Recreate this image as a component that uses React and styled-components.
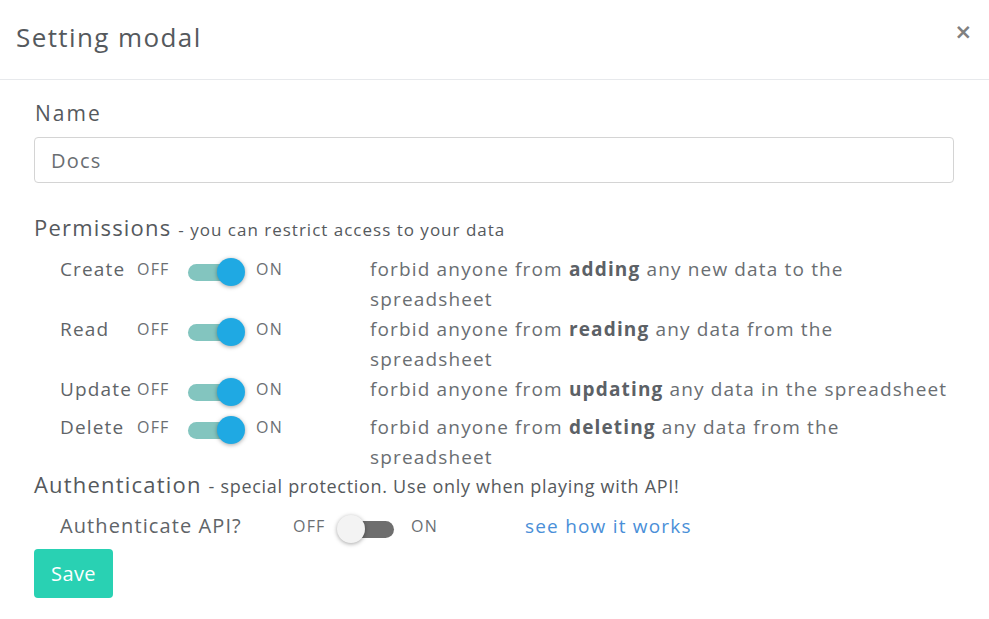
import React from "react";
import styled, { createGlobalStyle } from "styled-components";

const Global = createGlobalStyle`
  html, body { margin: 0; padding: 0; background: #fff; }
  body { font-family: "Open Sans", "Liberation Sans", sans-serif; color: #5b5f63; }
  * { box-sizing: border-box; }
`;

const Modal = styled.div`
  width: 989px;
  background: #fff;
`;

const Header = styled.div`
  height: 80px;
  padding: 0 16px 0 16px;
  display: flex;
  align-items: center;
  justify-content: space-between;
  border-bottom: 1px solid #e7e9ec;
`;

const Title = styled.h4`
  margin: 0 0 5px 0;
  font-size: 26px;
  font-weight: 400;
  color: #55595d;
  letter-spacing: 1.4px;
`;

const Close = styled.button`
  border: 0;
  background: none;
  padding: 0;
  margin: 0 1px 14px 0;
  font-family: "DejaVu Sans", sans-serif;
  font-size: 21px;
  font-weight: 700;
  color: #808080;
  line-height: 1;
  cursor: pointer;
`;

const Body = styled.div`
  padding: 20px 35px 20px 34px;
`;

const Label = styled.div`
  font-size: 21px;
  line-height: 26px;
  color: #55595d;
  letter-spacing: 2px;
  padding-left: 1px;
`;

const Input = styled.input`
  display: block;
  width: 100%;
  height: 46px;
  margin-top: 11px;
  padding: 0 16px;
  border: 1px solid #d4d4d4;
  border-radius: 4px;
  font-family: inherit;
  font-size: 20px;
  color: #6a6e72;
  letter-spacing: 1.2px;
  outline: none;
`;

const Section = styled.div`
  margin-top: ${(p) => p.$top}px;
  font-size: 22px;
  line-height: 30px;
  color: #55595d;
  letter-spacing: 1.2px;
`;

const SectionNote = styled.span`
  font-size: ${(p) => (p.$narrow ? "18px" : "17px")};
  letter-spacing: ${(p) => (p.$narrow ? "0.7px" : "1px")};
`;

const Rows = styled.div`
  margin-top: ${(p) => p.$top}px;
  display: flex;
  flex-direction: column;
`;

const Row = styled.div`
  display: grid;
  grid-template-columns: ${(p) => p.$cols};
  align-items: start;
  min-height: 38px;
  padding-left: 26px;
`;

const RowLabel = styled.div`
  font-size: ${(p) => (p.$wide ? "20px" : "19px")};
  line-height: 30px;
  color: #606468;
  letter-spacing: ${(p) => (p.$wide ? "1.1px" : "1.15px")};
  white-space: nowrap;
`;

const State = styled.div`
  font-size: 16px;
  line-height: 30px;
  color: #6b6f73;
  letter-spacing: 1.2px;
`;

const SwitchBox = styled.div`
  position: relative;
  width: 58px;
  height: 32px;
`;

const Track = styled.div`
  position: absolute;
  left: 0;
  top: 10px;
  width: ${(p) => (p.$on ? "52px" : "54px")};
  height: 17px;
  border-radius: 9px;
  background: ${(p) => (p.$on ? "#83c5bf" : "#6e6e6e")};
`;

const Thumb = styled.div`
  position: absolute;
  top: 4px;
  left: ${(p) => (p.$on ? "29px" : "-3px")};
  width: 28px;
  height: 28px;
  border-radius: 50%;
  background: ${(p) => (p.$on ? "#1fa9e3" : "#f3f3f3")};
  box-shadow: 0 1px 4px rgba(0, 0, 0, 0.35);
`;

const Desc = styled.div`
  font-size: 19px;
  line-height: 30px;
  color: #6a6e72;
  letter-spacing: 1.15px;
  b {
    font-weight: 700;
    color: #5c6166;
  }
`;

const Link = styled.a`
  font-size: 19px;
  line-height: 30px;
  color: #4a8fd8;
  text-decoration: none;
  letter-spacing: 1.2px;
`;

const SaveButton = styled.button`
  margin-top: 0;
  width: 79px;
  height: 49px;
  border: 0;
  border-radius: 4px;
  background: #29d1b3;
  color: #fff;
  font-family: inherit;
  font-size: 20px;
  letter-spacing: 0.4px;
  cursor: pointer;
`;

function Switch({ on }) {
  return (
    <SwitchBox>
      <Track $on={on} />
      <Thumb $on={on} />
    </SwitchBox>
  );
}

const permissions = [
  { label: "Create", verb: "adding", rest: "any new data to the", tail: "spreadsheet" },
  { label: "Read", verb: "reading", rest: "any data from the", tail: "spreadsheet" },
  { label: "Update", verb: "updating", rest: "any data in the spreadsheet" },
  { label: "Delete", verb: "deleting", rest: "any data from the", tail: "spreadsheet" },
];

const permCols = "77px 51px 68px 114px 1fr";
const authCols = "233px 47px 71px 114px 1fr";

export default function App() {
  return (
    <>
      <Global />
      <Modal>
        <Header>
          <Title>Setting modal</Title>
          <Close aria-label="close">×</Close>
        </Header>
        <Body>
          <Label>Name</Label>
          <Input defaultValue="Docs" />
          <Section $top={29}>
            Permissions <SectionNote>- you can restrict access to your data</SectionNote>
          </Section>
          <Rows $top={9}>
            {permissions.map((p) => (
              <Row key={p.label} $cols={permCols}>
                <RowLabel>{p.label}</RowLabel>
                <State>OFF</State>
                <Switch on />
                <State>ON</State>
                <Desc>
                  forbid anyone from <b>{p.verb}</b> {p.rest}
                  {p.tail && (
                    <>
                      <br />
                      {p.tail}
                    </>
                  )}
                </Desc>
              </Row>
            ))}
          </Rows>
          <Section $top={-3}>
            Authentication{" "}
            <SectionNote $narrow>- special protection. Use only when playing with API!</SectionNote>
          </Section>
          <Rows $top={10}>
            <Row $cols={authCols}>
              <RowLabel $wide>Authenticate API?</RowLabel>
              <State>OFF</State>
              <Switch on={false} />
              <State>ON</State>
              <Link href="#">see how it works</Link>
            </Row>
          </Rows>
          <SaveButton>Save</SaveButton>
        </Body>
      </Modal>
    </>
  );
}
